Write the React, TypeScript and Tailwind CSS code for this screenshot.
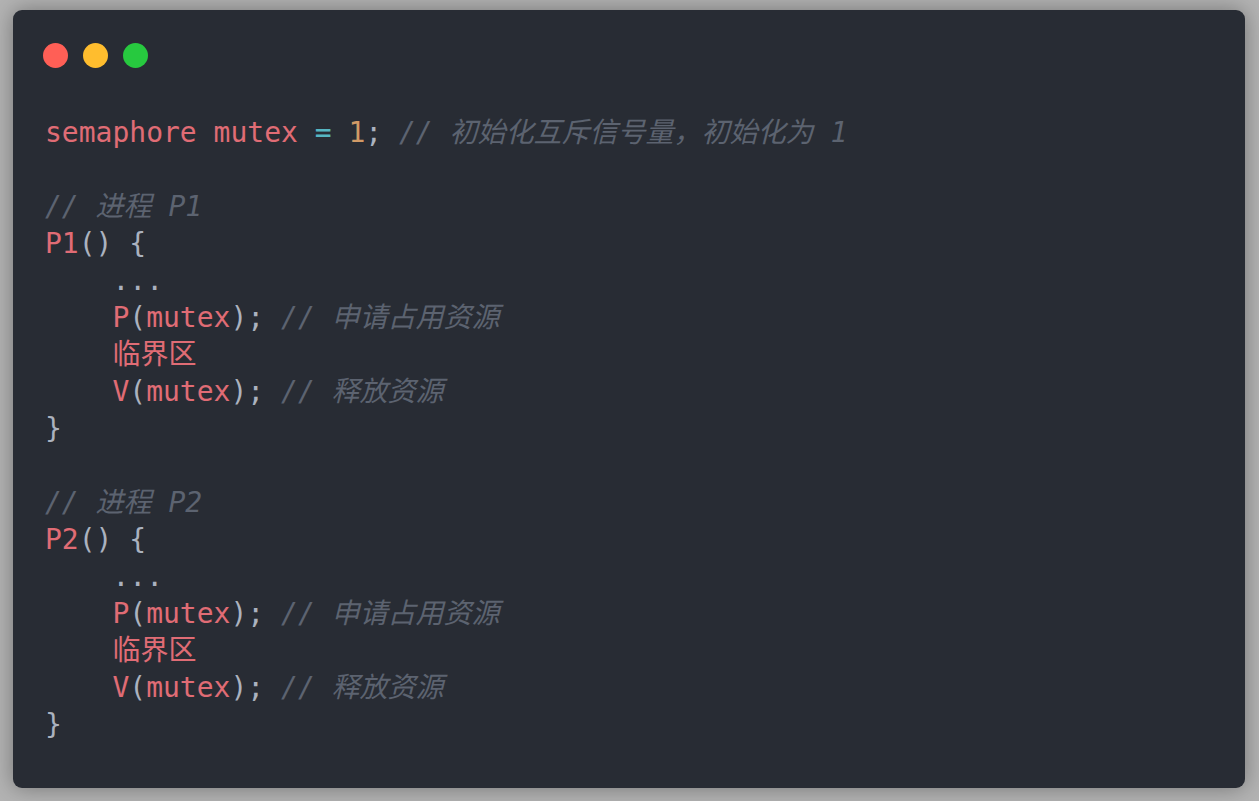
import React from "react";

type Tok = { t: string; c: string };

const red = "text-[#e06c75]";
const punc = "text-[#abb2bf]";
const cyan = "text-[#56b6c2]";
const orange = "text-[#d19a66]";
const cmt = "text-[#5c6370] italic";

const lines: Tok[][] = [
    [
        { t: "semaphore mutex ", c: red },
        { t: "=", c: cyan },
        { t: " ", c: punc },
        { t: "1", c: orange },
        { t: "; ", c: punc },
        { t: "// 初始化互斥信号量，初始化为 1", c: cmt },
    ],
    [],
    [{ t: "// 进程 P1", c: cmt }],
    [
        { t: "P1", c: red },
        { t: "() {", c: punc },
    ],
    [{ t: "    ...", c: punc }],
    [
        { t: "    P", c: red },
        { t: "(", c: punc },
        { t: "mutex", c: red },
        { t: "); ", c: punc },
        { t: "// 申请占用资源", c: cmt },
    ],
    [{ t: "    临界区", c: red }],
    [
        { t: "    V", c: red },
        { t: "(", c: punc },
        { t: "mutex", c: red },
        { t: "); ", c: punc },
        { t: "// 释放资源", c: cmt },
    ],
    [{ t: "}", c: punc }],
    [],
    [{ t: "// 进程 P2", c: cmt }],
    [
        { t: "P2", c: red },
        { t: "() {", c: punc },
    ],
    [{ t: "    ...", c: punc }],
    [
        { t: "    P", c: red },
        { t: "(", c: punc },
        { t: "mutex", c: red },
        { t: "); ", c: punc },
        { t: "// 申请占用资源", c: cmt },
    ],
    [{ t: "    临界区", c: red }],
    [
        { t: "    V", c: red },
        { t: "(", c: punc },
        { t: "mutex", c: red },
        { t: "); ", c: punc },
        { t: "// 释放资源", c: cmt },
    ],
    [{ t: "}", c: punc }],
];

const App: React.FC = () => {
    return (
        <div className="w-full h-[801px] bg-[#b3b3b3] pl-[13px] pt-[10px] pr-[14px] pb-[13px]">
            <div className="h-[778px] w-full bg-[#282c34] rounded-[9px] shadow-[0_0_22px_rgba(0,0,0,0.35)] pt-[33px] px-[30px]">
                <div className="flex gap-[15px] h-[25px]">
                    <span className="w-[25px] h-[25px] rounded-full bg-[#ff5f56]" />
                    <span className="w-[25px] h-[25px] rounded-full bg-[#ffbd2e]" />
                    <span className="w-[25px] h-[25px] rounded-full bg-[#27c93f]" />
                </div>
                <pre className="mt-[46px] ml-[2px] text-[28px] leading-[37px] font-['DejaVu_Sans_Mono','Noto_Sans_CJK_SC',monospace]">
                    {lines.map((line, i) => (
                        <div key={i} className="h-[37px] whitespace-pre">
                            {line.map((tok, j) => (
                                <span key={j} className={tok.c}>
                                    {tok.t}
                                </span>
                            ))}
                        </div>
                    ))}
                </pre>
            </div>
        </div>
    );
};

export default App;
